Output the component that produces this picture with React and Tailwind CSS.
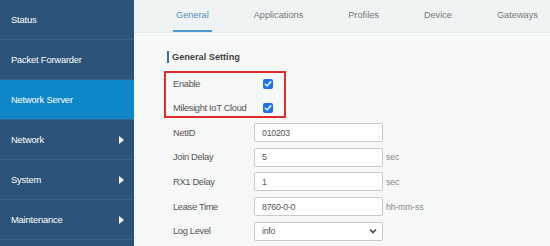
import React from "react";

const menu = [
  { label: "Status" },
  { label: "Packet Forwarder" },
  { label: "Network Server", active: true },
  { label: "Network", arrow: true },
  { label: "System", arrow: true },
  { label: "Maintenance", arrow: true },
];

function Check() {
  return (
    <div className="w-[10px] h-[10px] rounded-[2px] bg-[#1a73e8] flex items-center justify-center">
      <svg width="8" height="8" viewBox="0 0 8 8">
        <path d="M1.3 4.2 L3.2 6 L6.8 1.8" fill="none" stroke="white" strokeWidth="1.4" strokeLinecap="round" strokeLinejoin="round" />
      </svg>
    </div>
  );
}

function Row({ label, value, unit, select }) {
  return (
    <div className="flex items-center h-[19px]">
      <div className="w-[90px] pl-[9px] text-[#555]">{label}</div>
      <div className="w-[129px] h-[19px] border border-[#c9c9c9] bg-white rounded-[2px] flex items-center pl-[7px] pr-[5px] text-[#555] text-[8.8px] tracking-[-0.25px]">
        <span className="flex-1">{value}</span>
        {select && (
          <svg width="8" height="6" viewBox="0 0 8 6">
            <path d="M1 1.5 L4 4.5 L7 1.5" fill="none" stroke="#444" strokeWidth="1.6" />
          </svg>
        )}
      </div>
      {unit && <span className="ml-[3px] text-[#888] text-[8.8px] tracking-[-0.2px]">{unit}</span>}
    </div>
  );
}

export default function App() {
  return (
    <div
      className="flex w-[550px] h-[246px] overflow-hidden text-[9.4px] tracking-[-0.35px] leading-[12px] bg-[#f6f7f7]"
      style={{ fontFamily: '"Liberation Sans", Arial, sans-serif' }}
    >
      <div className="w-[134px] h-full bg-[#2c5379] flex flex-col text-[9.4px] tracking-[-0.2px]">
        {menu.map((m) => (
          <div
            key={m.label}
            className={
              "h-[40px] flex items-center pl-[11px] pr-[10px] text-white border-b border-[#3a6187] " +
              (m.active ? "bg-[#0e86c8]" : "")
            }
          >
            <span className="flex-1">{m.label}</span>
            {m.arrow && (
              <svg width="5" height="8" viewBox="0 0 5 8">
                <path d="M0 0 L5 4 L0 8 Z" fill="white" />
              </svg>
            )}
          </div>
        ))}
      </div>

      <div className="flex-1 flex flex-col">
        <div className="h-[33px] bg-[#f0f3f4] border-b border-[#e4e8ea] flex items-end gap-[39px] pl-[39px] text-[#777] text-[9.2px] tracking-normal">
          <div className="h-[32px] flex items-center px-[3px] border-b-2 border-[#4b9bd2] text-[#5a8fb8]">General</div>
          <div className="h-[32px] flex items-center px-[3px] border-b-2 border-transparent">Applications</div>
          <div className="h-[32px] flex items-center px-[3px] border-b-2 border-transparent">Profiles</div>
          <div className="h-[32px] flex items-center px-[3px] border-b-2 border-transparent">Device</div>
          <div className="h-[32px] flex items-center px-[3px] border-b-2 border-transparent">Gateways</div>
        </div>

        <div className="pl-[30px] pt-[17px] flex flex-col">
          <div className="ml-[3px] h-[14px] flex items-center font-bold text-[#444] text-[9.2px] tracking-normal">
            <div className="w-[2px] h-[12px] bg-[#2f73ad] mr-[3px]"></div>
            General Setting
          </div>

          <div className="mt-[7px] w-[122px] border-2 border-[#e02b2b] pt-[4px] pb-[1px] flex flex-col gap-[10px]">
            <div className="h-[14px] flex items-center pl-[7px] text-[#555]">
              <span className="w-[90px]">Enable</span>
              <Check />
            </div>
            <div className="h-[14px] flex items-center pl-[7px] text-[#555]">
              <span className="w-[90px]">Milesight IoT Cloud</span>
              <Check />
            </div>
          </div>

          <div className="mt-[5px] flex flex-col gap-[5.7px]">
            <Row label="NetID" value="010203" />
            <Row label="Join Delay" value="5" unit="sec" />
            <Row label="RX1 Delay" value="1" unit="sec" />
            <Row label="Lease Time" value="8760-0-0" unit="hh-mm-ss" />
            <Row label="Log Level" value="info" select />
          </div>
        </div>
      </div>
    </div>
  );
}
